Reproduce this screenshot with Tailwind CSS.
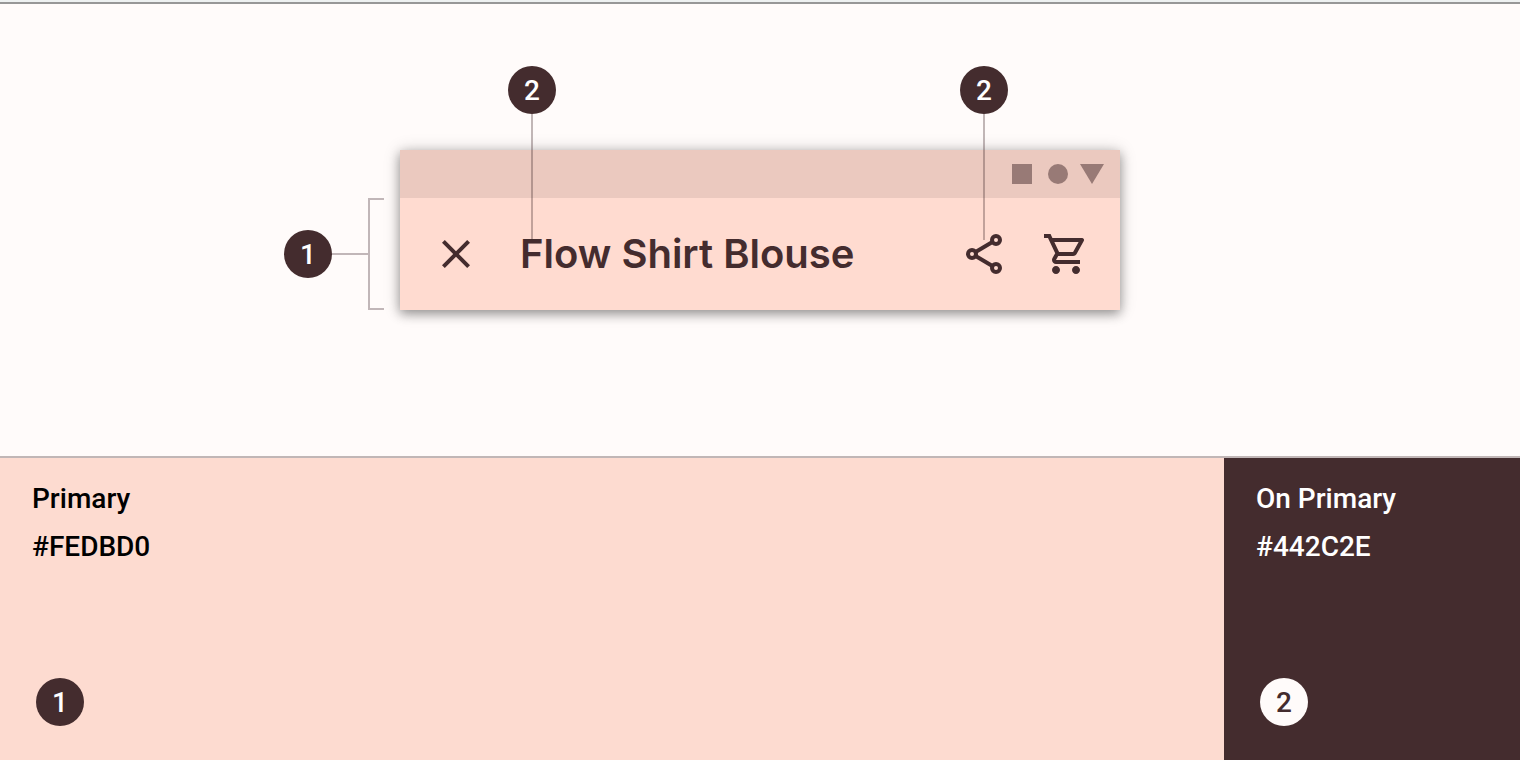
<!doctype html>
<html lang="en">
<head>
  <meta charset="UTF-8">
  <meta name="viewport" content="width=device-width, initial-scale=1.0">
  <script src="https://cdn.jsdelivr.net/npm/@tailwindcss/browser@4"></script>
  <title>Top app bar color</title>
</head>
<body class="flex min-h-screen flex-col bg-[#fffbfa] font-['Roboto',sans-serif] font-medium text-[#442c2e]">
  <div class="h-1 border-b-2 border-[#979797] bg-[#eef1f1]"></div>

  <!-- App bar preview -->
  <main class="flex justify-center py-[146px]">
    <div class="relative w-full max-w-[720px]">
      <header class="bg-[#ffdbd0] shadow-[0_4px_10px_rgba(0,0,0,0.32),0_1px_16px_rgba(0,0,0,0.2)]">
        <div class="flex h-12 items-center justify-end bg-[#ebc9bf] px-4">
          <svg class="h-5 w-[92px] fill-[#987a76]" viewBox="0 0 92 20" aria-hidden="true">
            <path d="M0 0h20v20H0z"/>
            <circle cx="46" cy="10" r="10"/>
            <path d="M68 0h24L80 20z"/>
          </svg>
        </div>
        <div class="flex h-28 items-center pl-8 pr-[30px]">
          <button type="button" aria-label="Close">
            <svg class="size-12 fill-current" viewBox="0 0 24 24"><path d="M19 6.41 17.59 5 12 10.59 6.41 5 5 6.41 10.59 12 5 17.59 6.41 19 12 13.41 17.59 19 19 17.59 13.41 12z"/></svg>
          </button>
          <h1 class="ml-10 flex-1 whitespace-nowrap font-['Inter',sans-serif] text-[40px] leading-12 font-semibold">Flow Shirt Blouse</h1>
          <div class="flex gap-[34px]">
            <button type="button" aria-label="Share">
              <svg class="size-12 fill-none stroke-current stroke-2" viewBox="0 0 24 24">
                <circle cx="18" cy="5" r="2"/>
                <circle cx="6" cy="12" r="2"/>
                <circle cx="18" cy="19" r="2"/>
                <path d="m7.8 10.95 8.4-4.9M7.8 13.05l8.4 4.9"/>
              </svg>
            </button>
            <button type="button" aria-label="Cart">
              <svg class="size-12 fill-current" viewBox="0 0 24 24"><path d="M15.55 13c.75 0 1.41-.41 1.75-1.03l3.58-6.49A.996.996 0 0 0 20.01 4H5.21l-.94-2H1v2h2l3.6 7.59-1.35 2.44C4.52 15.37 5.48 17 7 17h12v-2H7l1.1-2h7.45zM6.16 6h12.15l-2.76 5H8.53L6.16 6zM7 18c-1.1 0-1.99.9-1.99 2S5.9 22 7 22s2-.9 2-2-.9-2-2-2zm10 0c-1.1 0-1.99.9-1.99 2s.89 2 1.99 2 2-.9 2-2-.9-2-2-2z"/></svg>
            </button>
          </div>
        </div>
      </header>

      <!-- Callouts -->
      <div class="absolute right-full bottom-0 mr-4 flex h-28 items-center">
        <span class="flex size-12 items-center justify-center rounded-full bg-[#442c2e] pt-0.5 text-[28px] text-white">1</span>
        <span class="h-0.5 w-9 bg-[#c1b6b8]"></span>
        <span class="h-full w-4 border-2 border-r-0 border-[#c1b6b8]"></span>
      </div>
      <div class="absolute -top-[84px] left-[108px] flex flex-col items-center">
        <span class="flex size-12 items-center justify-center rounded-full bg-[#442c2e] pt-0.5 text-[28px] text-white">2</span>
        <span class="h-[126px] w-0.5 bg-[#442c2e]/33"></span>
      </div>
      <div class="absolute -top-[84px] right-28 flex flex-col items-center">
        <span class="flex size-12 items-center justify-center rounded-full bg-[#442c2e] pt-0.5 text-[28px] text-white">2</span>
        <span class="h-[126px] w-0.5 bg-[#442c2e]/33"></span>
      </div>
    </div>
  </main>

  <!-- Color swatches -->
  <section class="flex flex-1 border-t-2 border-[#c1b6b6] text-[28px] leading-12">
    <div class="flex flex-1 flex-col bg-[#fddbd0] px-8 pt-[17px] pb-[34px] text-black">
      <h2>Primary</h2>
      <p>#FEDBD0</p>
      <span class="mt-auto ml-1 flex size-12 items-center justify-center rounded-full bg-[#442c2e] pt-0.5 text-white">1</span>
    </div>
    <div class="flex w-[296px] flex-col bg-[#442c2e] px-8 pt-[17px] pb-[34px] text-white">
      <h2>On Primary</h2>
      <p>#442C2E</p>
      <span class="mt-auto ml-1 flex size-12 items-center justify-center rounded-full bg-[#fffbfa] pt-0.5 text-[#442c2e]">2</span>
    </div>
  </section>
</body>
</html>
